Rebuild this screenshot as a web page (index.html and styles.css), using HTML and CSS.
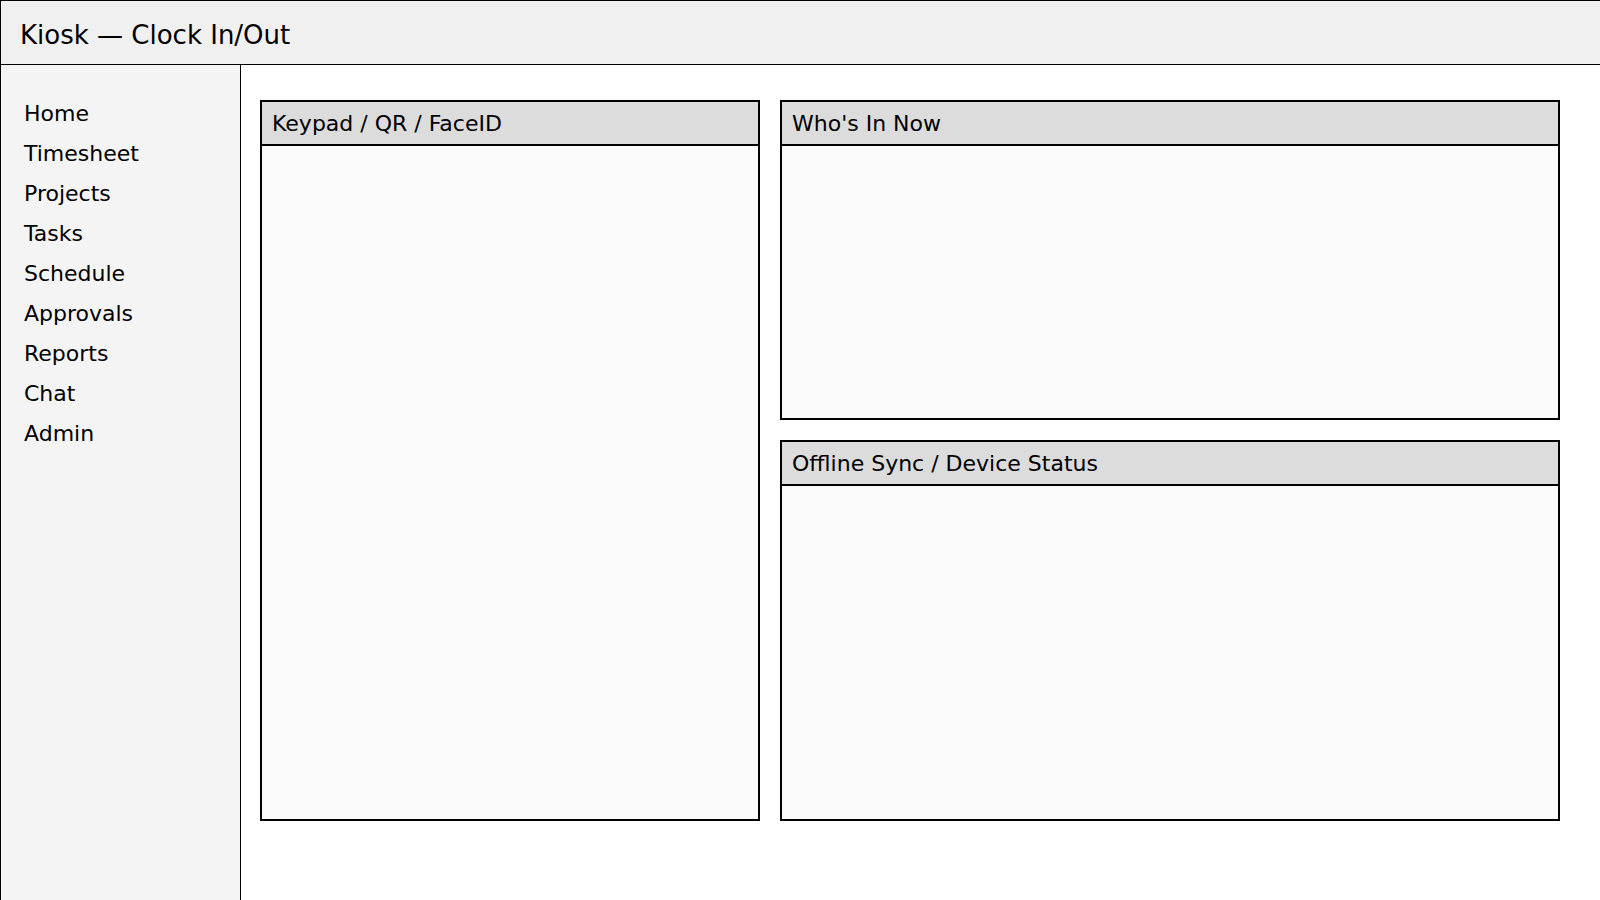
FILE: index.html
```html
<!DOCTYPE html>
<html lang="en">
<head>
<meta charset="utf-8">
<title>Kiosk — Clock In/Out</title>
<link rel="stylesheet" href="styles.css">
</head>
<body>
<div class="app">
  <header class="topbar">Kiosk — Clock In/Out</header>
  <div class="layout">
    <nav class="sidebar">
      <a class="nav-item">Home</a>
      <a class="nav-item">Timesheet</a>
      <a class="nav-item">Projects</a>
      <a class="nav-item">Tasks</a>
      <a class="nav-item">Schedule</a>
      <a class="nav-item">Approvals</a>
      <a class="nav-item">Reports</a>
      <a class="nav-item">Chat</a>
      <a class="nav-item">Admin</a>
    </nav>
    <main class="content">
      <div class="grid">
        <section class="panel panel-keypad">
          <div class="panel-title">Keypad / QR / FaceID</div>
          <div class="panel-body"></div>
        </section>
        <section class="panel panel-whos">
          <div class="panel-title">Who's In Now</div>
          <div class="panel-body"></div>
        </section>
        <section class="panel panel-sync">
          <div class="panel-title">Offline Sync / Device Status</div>
          <div class="panel-body"></div>
        </section>
      </div>
    </main>
  </div>
</div>
</body>
</html>
```

FILE: styles.css
```css
* { box-sizing: border-box; }
html, body { margin: 0; padding: 0; }
body {
  font-family: "DejaVu Sans", sans-serif;
  color: #000;
  background: #fff;
  width: 1600px;
  height: 900px;
  overflow: hidden;
}
.app {
  display: flex;
  flex-direction: column;
  height: 900px;
}
.topbar {
  height: 65px;
  flex: 0 0 65px;
  background: #f0f0f0;
  border-top: 1px solid #000;
  border-left: 1px solid #000;
  border-bottom: 1px solid #000;
  font-size: 26px;
  line-height: 60px;
  padding: 4px 0 0 19px;
  white-space: nowrap;
}
.layout {
  flex: 1;
  display: flex;
  min-height: 0;
}
.sidebar {
  width: 241px;
  flex: 0 0 241px;
  background: #f4f4f4;
  border-left: 1px solid #000;
  border-right: 1px solid #000;
  padding: 29px 0 0 23px;
  display: flex;
  flex-direction: column;
}
.nav-item {
  font-size: 22px;
  line-height: 40px;
  color: #000;
  text-decoration: none;
}
.content {
  flex: 1;
  padding: 35px 0 0 19px;
}
.grid {
  display: grid;
  grid-template-columns: 500px 780px;
  grid-template-rows: 320px 381px;
  gap: 20px;
}
.panel {
  border: 2px solid #000;
  background: #fafafa;
  display: flex;
  flex-direction: column;
}
.panel-keypad { grid-column: 1; grid-row: 1 / span 2; }
.panel-whos { grid-column: 2; grid-row: 1; }
.panel-sync { grid-column: 2; grid-row: 2; }
.panel-title {
  height: 44px;
  flex: 0 0 44px;
  background: #dcdcdc;
  border-bottom: 2px solid #000;
  font-size: 22px;
  line-height: 42px;
  padding: 1px 0 0 10px;
  white-space: nowrap;
}
.panel-body { flex: 1; }
```
